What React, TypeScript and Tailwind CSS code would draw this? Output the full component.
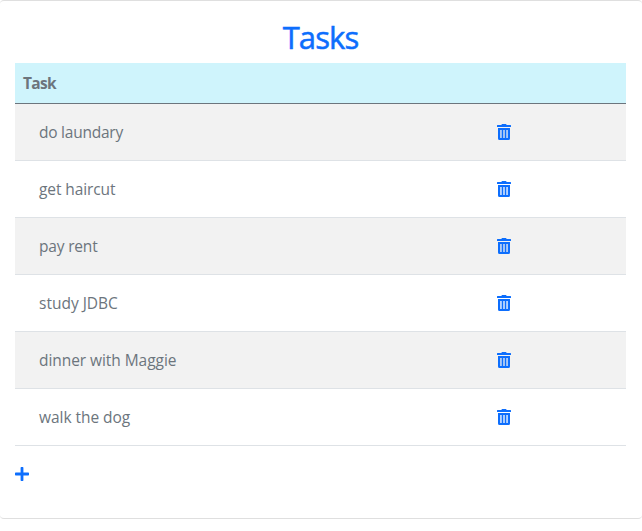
const tasks = [
  { name: "do laundary", spacing: "tracking-[-0.24px]" },
  { name: "get haircut", spacing: "tracking-[-0.1px]" },
  { name: "pay rent", spacing: "tracking-[-0.18px]" },
  { name: "study JDBC", spacing: "tracking-[0px]" },
  { name: "dinner with Maggie", spacing: "tracking-[-0.06px]" },
  { name: "walk the dog", spacing: "tracking-[-0.05px]" },
];

function TrashIcon() {
  return (
    <svg viewBox="0 0 14 16" className="h-4 w-3.5 text-[#0d6efd]" fill="currentColor">
      <path fillRule="evenodd" d="M5 0h4l.7 1H13.500a.5.5 0 0 1 .5.5V3H0V1.500a.5.5 0 0 1 .5-.5h3.800L5 0zM1 4h12v10.500a1.500 1.500 0 0 1-1.500 1.500h-9A1.500 1.500 0 0 1 1 14.500V4zm2.300 2v8h1.300V6H3.300zm3.050 0v8h1.300V6h-1.300zm3.050 0v8h1.300V6H9.400z" />
    </svg>
  );
}

function PlusIcon() {
  return (
    <svg viewBox="0 0 14 14" className="mt-[21px] size-3.5 text-[#0d6efd]" fill="currentColor">
      <path d="M6.300 0h1.400a.7.7 0 0 1 .7.7v4.900h4.900a.7.7 0 0 1 .7.7v1.400a.7.7 0 0 1-.7.7H8.400v4.900a.7.7 0 0 1-.7.7H6.300a.7.7 0 0 1-.7-.7V8.400H.7A.7.7 0 0 1 0 7.700V6.300a.7.7 0 0 1 .7-.7h4.900V.7A.7.7 0 0 1 6.300 0z" />
    </svg>
  );
}

export default function App() {
  return (
    <div className="h-[531px] w-full bg-white font-['Open_Sans',sans-serif] text-[15.5px] text-[#6c757d]">
      <main className="h-[519px] rounded border-y border-[#dfdfdf] px-[15px] pr-4 pt-[17px]">
        <h1 className="mb-2 flex h-[37px] justify-center text-[31px] leading-[38px] font-medium tracking-[-0.9px] text-[#0d6efd] [-webkit-text-stroke:0.5px_#0d6efd]">Tasks</h1>
        <div className="flex h-[41px] items-center border-b border-[#6c757d] bg-[#cff4fc] px-2 pt-[2px] font-bold tracking-[-0.7px]">Task</div>
        <div>
          {tasks.map((task) => (
            <div key={task.name} className="flex h-[57px] items-center border-b border-[#dee2e6] pl-6 odd:bg-[#f2f2f2]">
              <div className="w-[458px] pt-[2px]"><span className={task.spacing}>{task.name}</span></div>
              <TrashIcon />
            </div>
          ))}
        </div>
        <PlusIcon />
      </main>
    </div>
  );
}
